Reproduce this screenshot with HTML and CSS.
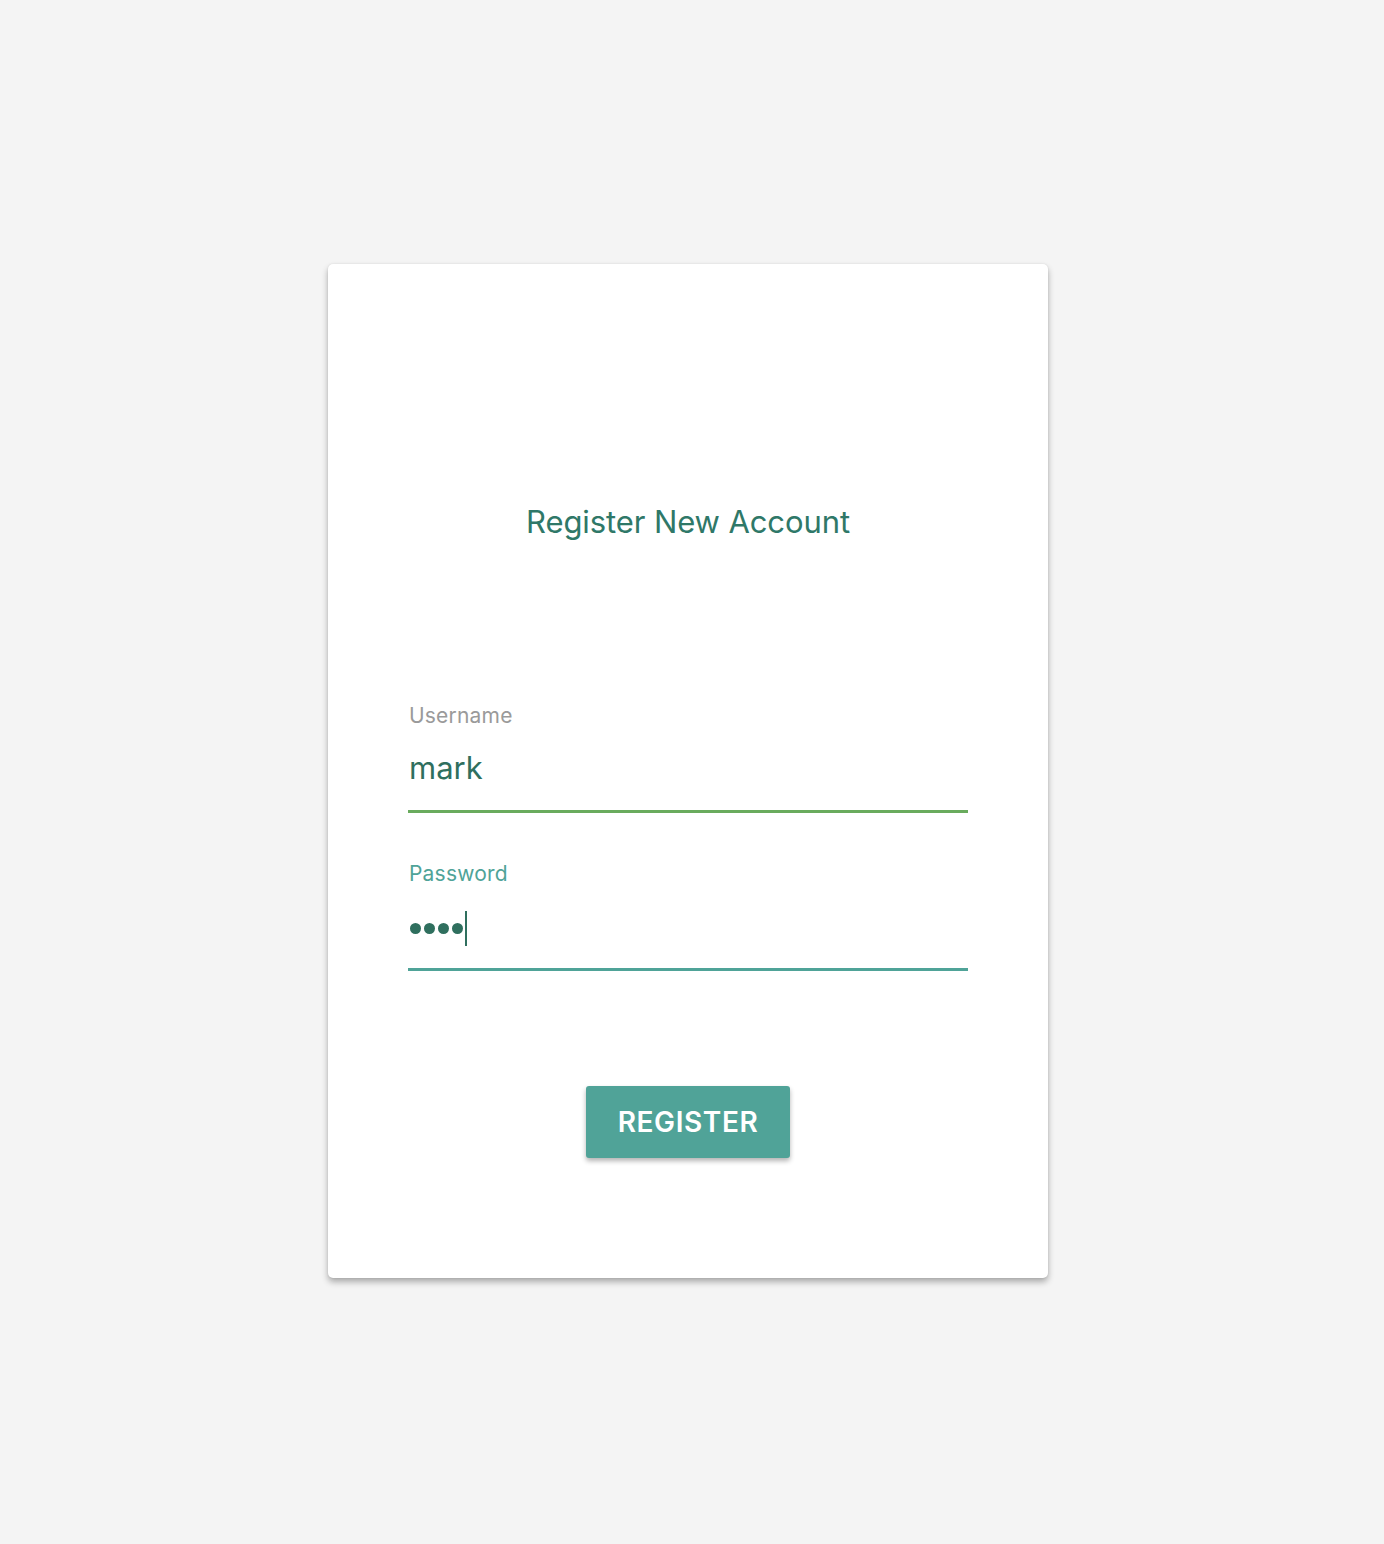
FILE: index.html
```html
<!DOCTYPE html>
<html>
<head>
<meta charset="utf-8">
<title>Register</title>
<link rel="stylesheet" href="styles.css">
</head>
<body>
<main class="page">
  <section class="card">
    <h1 class="title">Register New Account</h1>
    <div class="field field-user">
      <label class="label label-idle">Username</label>
      <div class="value value-text">mark</div>
    </div>
    <div class="field field-pass">
      <label class="label label-active">Password</label>
      <div class="value dots"><span class="dot"></span><span class="dot"></span><span class="dot"></span><span class="dot"></span><span class="caret"></span></div>
    </div>
    <div class="actions">
      <button class="btn">REGISTER</button>
    </div>
  </section>
</main>
</body>
</html>
```
FILE: styles.css
```css
html, body {
  margin: 0;
  padding: 0;
  background: #f4f4f4;
  font-family: Inter, "Noto Sans", "Liberation Sans", sans-serif;
}
.page {
  display: flex;
  justify-content: center;
  padding: 264px 8px 0 0;
  min-height: 1544px;
  box-sizing: border-box;
}
.card {
  width: 720px;
  height: 1014px;
  box-sizing: border-box;
  background: #fff;
  border-radius: 5px;
  box-shadow: 0 4px 6px rgba(0,0,0,0.3), 0 0 2px rgba(0,0,0,0.1);
  padding: 240px 80px 0;
  display: flex;
  flex-direction: column;
}
.title {
  margin: 0;
  text-align: center;
  font-weight: 400;
  font-size: 31px;
  line-height: 36px;
  color: #2f7868;
  letter-spacing: -0.1px;
}
.field {
  display: flex;
  flex-direction: column;
}
.field-user {
  margin-top: 164px;
  border-bottom: 3px solid #69ab5d;
}
.field-pass {
  margin-top: 49px;
  border-bottom: 3px solid #4fa398;
}
.label {
  font-size: 21px;
  line-height: 24px;
  padding-left: 1px;
  letter-spacing: 0.2px;
}
.label-idle { color: #9a9a9a; }
.label-active { color: #4fa398; }
.value {
  margin-top: 22px;
  height: 40px;
  margin-bottom: 20px;
  font-size: 31px;
  line-height: 40px;
  color: #2f6f5e;
  padding-left: 1px;
}
.value-text {
  margin-top: 20px;
  margin-bottom: 22px;
}
.dots {
  display: flex;
  align-items: center;
  padding-left: 2px;
  gap: 3px;
}
.dot {
  width: 11px;
  height: 11px;
  border-radius: 50%;
  background: #2f6f5e;
}
.caret {
  width: 2px;
  height: 35px;
  background: #2f6f5e;
  margin-left: -1px;
}
.actions {
  display: flex;
  justify-content: center;
  margin-top: 115px;
}
.btn {
  width: 204px;
  height: 72px;
  border: 0;
  border-radius: 3px;
  background: #50a398;
  color: #fff;
  font-family: Inter, "Noto Sans", "Liberation Sans", sans-serif;
  font-size: 28px;
  font-weight: 600;
  letter-spacing: 0.6px;
  box-shadow: 0 3px 5px rgba(0,0,0,0.3);
}
```
